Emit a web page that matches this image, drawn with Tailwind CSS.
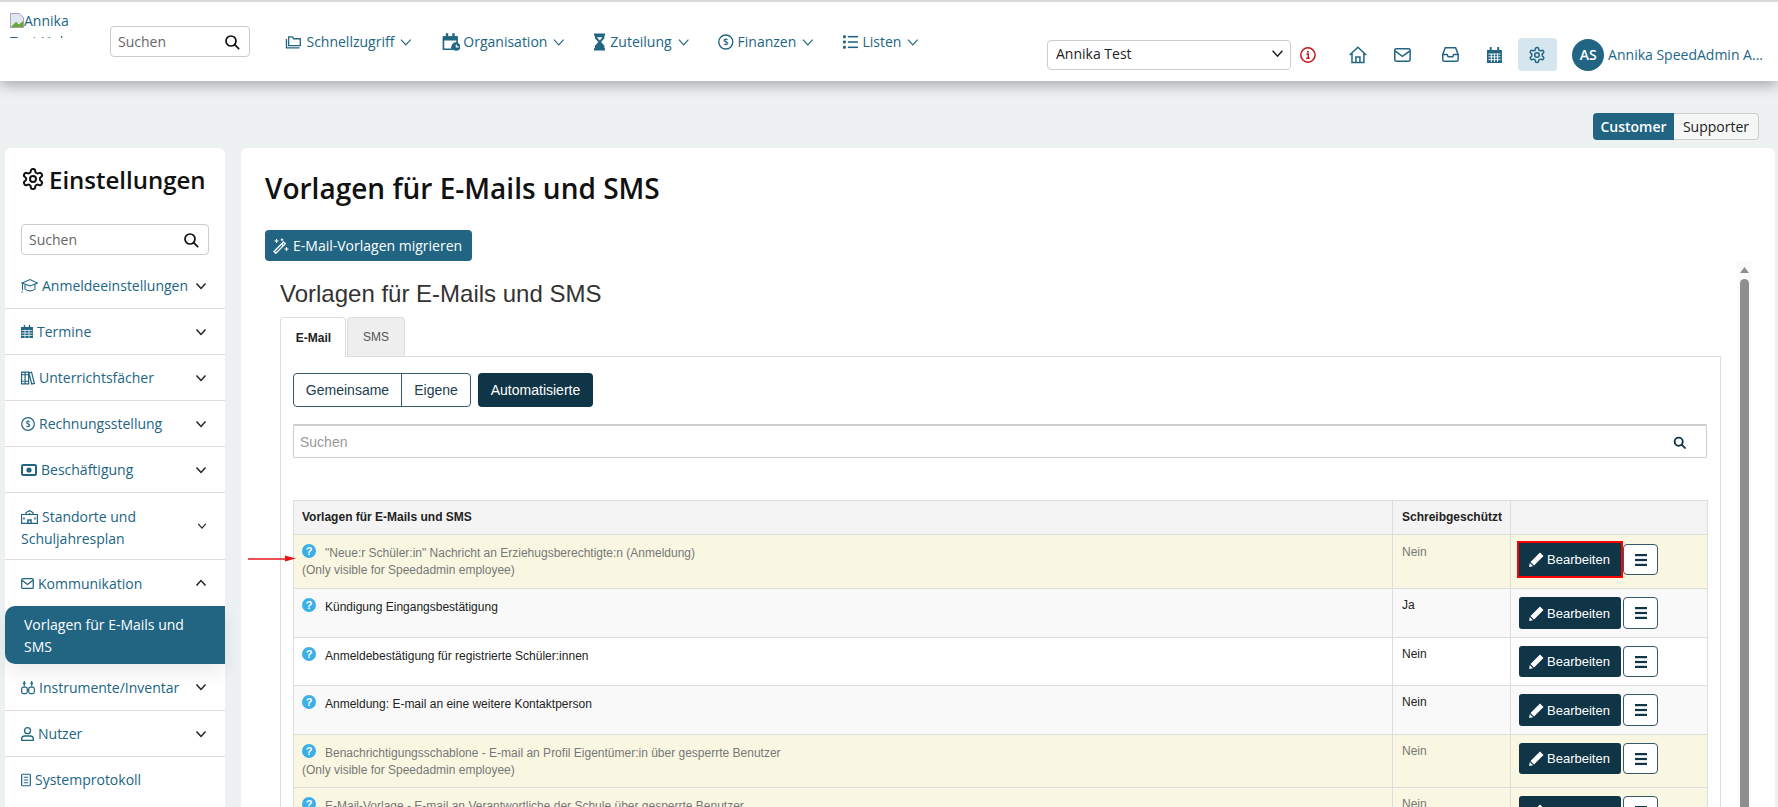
<!doctype html>
<html lang="de"><head><meta charset="utf-8"><title>Vorlagen</title>
<script src="https://cdn.jsdelivr.net/npm/@tailwindcss/browser@4"></script></head>
<body class="m-0 bg-[#eef1f2]">
<div class="h-[807px] w-[1778px] overflow-hidden flex flex-col relative font-['Open_Sans',sans-serif] text-[14px] text-[#216583]">
<!-- header -->
<header class="relative z-10 h-[81px] bg-white border-t-2 border-[#d9d9d9] shadow-[0_3px_14px_rgba(0,0,0,0.35)] flex items-start shrink-0">
  <div class="ml-[10px] mt-[8px] w-[68px] h-[28px] overflow-hidden leading-[21px] text-[14px]">
    <svg class="inline-block align-[-2px]" width="14" height="15" viewBox="0 0 16 17"><path d="M.5.5h10l5 5v11H.5z" fill="#dfe6f5" stroke="#999"/><path d="M1 16l6-6 3 3 5-4v7H1z" fill="#6aa53a"/></svg>Annika Test Hub
  </div>
  <div class="ml-[32px] mt-[24px] w-[140px] h-[31px] border border-[#ccc] rounded-[4px] flex items-center justify-between pl-[7px] pr-[9px] text-[#666]">
    <span>Suchen</span>
    <svg width="16" height="16" viewBox="0 0 24 24" fill="none" stroke="#111" stroke-width="2.600" stroke-linecap="round"><circle cx="10.500" cy="10.500" r="7.500"/><path d="m16 16 6 6"/></svg>
  </div>
  <nav class="ml-[35px] mt-[24px] h-[31px] flex items-center gap-[29px]">
    <div class="w-[127px] flex items-center gap-[4px]">
      <svg width="18" height="18" viewBox="0 0 24 24" fill="none" stroke="#216583" stroke-width="1.800"><path d="M5 5h5l2 2.500h9V17H5z"/><path d="M2 8v12h18"/></svg>
      <span>Schnellzugriff</span>
      <svg class="ml-[2px]" width="12" height="12" viewBox="0 0 24 24" fill="none" stroke="#216583" stroke-width="2.400"><path d="m2 7 10 11 10-11"/></svg>
    </div>
    <div class="w-[124px] flex items-center gap-[3px]">
      <svg width="20" height="20" viewBox="0 0 24 24"><path d="M3 6h17v7a6 6 0 0 0-6 8H3z" fill="none" stroke="#216583" stroke-width="2"/><path d="M3 5h17v5H3zM6 1h3v4H6zM14 1h3v4h-3z" fill="#216583"/><circle cx="19" cy="18" r="5" fill="#216583"/><path d="M19 15v3h3" stroke="#fff" fill="none" stroke-width="1.400"/></svg>
      <span>Organisation</span>
      <svg class="ml-[3px]" width="12" height="12" viewBox="0 0 24 24" fill="none" stroke="#216583" stroke-width="2.400"><path d="m2 7 10 11 10-11"/></svg>
    </div>
    <div class="w-[95px] flex items-center gap-[5px]">
      <svg width="12" height="18" viewBox="0 0 12 18"><path d="M0 0h12v2.500h-1V5L7.500 9 11 13v2.500h1V18H0v-2.500h1V13l3.500-4L1 5V2.500H0z" fill="#216583"/><path d="M3 4h6L6 7.500z" fill="#fff"/></svg>
      <span>Zuteilung</span>
      <svg class="ml-[1px]" width="12" height="12" viewBox="0 0 24 24" fill="none" stroke="#216583" stroke-width="2.400"><path d="m2 7 10 11 10-11"/></svg>
    </div>
    <div class="w-[96px] flex items-center gap-[4px]">
      <svg width="16" height="16" viewBox="0 0 16 16" fill="none" stroke="#216583" stroke-width="1.400"><circle cx="8" cy="8" r="7.200"/><text x="8" y="11.500" font-size="10" font-family="Open Sans" font-weight="600" text-anchor="middle" fill="#216583" stroke="none">$</text></svg>
      <span>Finanzen</span>
      <svg class="ml-[2px]" width="12" height="12" viewBox="0 0 24 24" fill="none" stroke="#216583" stroke-width="2.400"><path d="m2 7 10 11 10-11"/></svg>
    </div>
    <div class="w-[76px] flex items-center gap-[4px]">
      <svg width="16" height="14" viewBox="0 0 16 14" fill="#216583"><rect x="0" y="0" width="3" height="3" rx="1"/><rect x="0" y="5.500" width="3" height="3" rx="1"/><rect x="0" y="11" width="3" height="3" rx="1"/><rect x="5" y=".7" width="11" height="1.600"/><rect x="5" y="6.200" width="11" height="1.600"/><rect x="5" y="11.700" width="11" height="1.600"/></svg>
      <span>Listen</span>
      <svg class="ml-[2px]" width="12" height="12" viewBox="0 0 24 24" fill="none" stroke="#216583" stroke-width="2.400"><path d="m2 7 10 11 10-11"/></svg>
    </div>
  </nav>
  <div class="ml-auto mt-[36px] flex items-center h-[33px] pr-[15px] w-[731px]">
    <div class="w-[246px] h-[30px] border border-[#ccc] rounded-[4px] flex items-center justify-between pl-[8px] pr-[6px] pb-[2px] text-[#222]">
      <span>Annika Test</span>
      <svg width="13" height="13" viewBox="0 0 24 24" fill="none" stroke="#222" stroke-width="2.800"><path d="m3 7 9 10 9-10"/></svg>
    </div>
    <svg class="ml-[9px]" width="16" height="16" viewBox="0 0 16 16" fill="none" stroke="#c81414" stroke-width="1.500"><circle cx="8" cy="8" r="7.200"/><path d="M6.500 7H8.300v4.200M6.300 11.300h3.500" stroke-width="1.400"/><circle cx="8" cy="4.700" r="1" fill="#c81414" stroke="none"/></svg>
    <svg class="ml-[33px]" width="18" height="18" viewBox="0 0 18 18" fill="none" stroke="#216583" stroke-width="1.500"><path d="M.7 9 9 1.200 17.300 9M3 7v9.500h12V7M7 16.500v-5.500h4v5.500"/></svg>
    <svg class="ml-[27px]" width="17" height="14" viewBox="0 0 18 15" fill="none" stroke="#216583" stroke-width="1.600"><rect x=".8" y=".8" width="16.400" height="13.400" rx="1.500"/><path d="m1 3 8 6 8-6"/></svg>
    <svg class="ml-[31px]" width="17" height="15" viewBox="0 0 18 16" fill="none" stroke="#216583" stroke-width="1.600"><path d="M3.500.8h11L17.200 8v5.500a1.700 1.700 0 0 1-1.700 1.700h-13A1.700 1.700 0 0 1 .8 13.500V8z"/><path d="M1 8h4.500l1 2.500h5L12.500 8H17"/></svg>
    <svg class="ml-[28px]" width="15" height="16" viewBox="0 0 16 17"><path d="M0 3h16v14H0zM3 0h2v3H3zM11 0h2v3h-2z" fill="#216583"/><path d="M1.500 7.500h13M1.500 10.500h13M1.500 13.500h13M4.700 7v9M8 7v9M11.300 7v9" stroke="#fff" stroke-width="1" fill="none"/></svg>
    <div class="ml-[16px] w-[40px] h-[33px] rounded-[4px] bg-[#d6e6ef] flex items-center justify-center">
      <svg width="18" height="18" viewBox="0 0 24 24" fill="none" stroke="#216583" stroke-width="2"><path d="M12.220 2h-.44a2 2 0 0 0-2 2v.18a2 2 0 0 1-1 1.730l-.43.25a2 2 0 0 1-2 0l-.15-.08a2 2 0 0 0-2.730.73l-.22.38a2 2 0 0 0 .73 2.730l.15.1a2 2 0 0 1 1 1.720v.51a2 2 0 0 1-1 1.740l-.15.09a2 2 0 0 0-.73 2.730l.22.38a2 2 0 0 0 2.730.73l.15-.08a2 2 0 0 1 2 0l.43.25a2 2 0 0 1 1 1.730V20a2 2 0 0 0 2 2h.44a2 2 0 0 0 2-2v-.18a2 2 0 0 1 1-1.730l.43-.25a2 2 0 0 1 2 0l.15.08a2 2 0 0 0 2.730-.73l.22-.39a2 2 0 0 0-.73-2.730l-.15-.08a2 2 0 0 1-1-1.740v-.5a2 2 0 0 1 1-1.740l.15-.09a2 2 0 0 0 .73-2.730l-.22-.38a2 2 0 0 0-2.730-.73l-.15.08a2 2 0 0 1-2 0l-.43-.25a2 2 0 0 1-1-1.730V4a2 2 0 0 0-2-2z"/><circle cx="12" cy="12" r="3"/></svg>
    </div>
    <div class="ml-[15px] w-[32px] h-[32px] rounded-full bg-[#216583] text-white font-semibold flex items-center justify-center">AS</div>
    <span class="ml-[4px] whitespace-nowrap">Annika SpeedAdmin A...</span>
  </div>
</header>
<!-- toggle -->
<div class="h-[67px] shrink-0 flex justify-end items-start pt-[32px] pr-[19px]">
  <div class="flex h-[27px] items-stretch">
    <div class="w-[81px] bg-[#216583] text-white font-semibold rounded-l-[4px] flex items-center justify-center">Customer</div>
    <div class="w-[85px] border border-[#ccc] border-l-0 bg-[#f5f6f6] text-[#222] rounded-r-[4px] flex items-center justify-center">Supporter</div>
  </div>
</div>
<!-- body -->
<div class="flex-1 min-h-0 flex pl-[5px] pr-[3px] gap-[16px]">
  <!-- sidebar -->
  <aside class="w-[220px] shrink-0 bg-white rounded-t-[6px] flex flex-col">
    <div class="h-[76px] shrink-0 flex items-center pl-[16px] pb-[14px] gap-[4px] text-[#111]">
      <svg width="24" height="24" viewBox="0 0 24 24" fill="none" stroke="#111" stroke-width="2"><path d="M12.220 2h-.44a2 2 0 0 0-2 2v.18a2 2 0 0 1-1 1.730l-.43.25a2 2 0 0 1-2 0l-.15-.08a2 2 0 0 0-2.730.73l-.22.38a2 2 0 0 0 .73 2.730l.15.1a2 2 0 0 1 1 1.720v.51a2 2 0 0 1-1 1.740l-.15.09a2 2 0 0 0-.73 2.730l.22.38a2 2 0 0 0 2.730.73l.15-.08a2 2 0 0 1 2 0l.43.25a2 2 0 0 1 1 1.730V20a2 2 0 0 0 2 2h.44a2 2 0 0 0 2-2v-.18a2 2 0 0 1 1-1.730l.43-.25a2 2 0 0 1 2 0l.15.08a2 2 0 0 0 2.730-.73l.22-.39a2 2 0 0 0-.73-2.730l-.15-.08a2 2 0 0 1-1-1.740v-.5a2 2 0 0 1 1-1.740l.15-.09a2 2 0 0 0 .73-2.730l-.22-.38a2 2 0 0 0-2.730-.73l-.15.08a2 2 0 0 1-2 0l-.43-.25a2 2 0 0 1-1-1.730V4a2 2 0 0 0-2-2z"/><circle cx="12" cy="12" r="3"/></svg>
      <span class="text-[24px] leading-[33px] font-semibold">Einstellungen</span>
    </div>
    <div class="ml-[16px] w-[188px] h-[31px] shrink-0 border border-[#ccc] rounded-[4px] flex items-center justify-between pl-[7px] pr-[9px] text-[#666]">
      <span>Suchen</span>
      <svg width="16" height="16" viewBox="0 0 24 24" fill="none" stroke="#111" stroke-width="2.600" stroke-linecap="round"><circle cx="10.500" cy="10.500" r="7.500"/><path d="m16 16 6 6"/></svg>
    </div>
    <div class="mt-[8px] flex flex-col">
      <div class="h-[46px] border-b border-[#ddd] flex items-center justify-between pl-[16px] pr-[18px]">
        <span class="flex items-center gap-[4px]"><svg width="17" height="15" viewBox="0 0 17 15" fill="none" stroke="#216583" stroke-width="1.100"><path d="M1 5 9 1.500 16.500 5 9 8z"/><path d="M4 7v4c2 2.500 8 2.500 10 0V6.500M1.500 5.500V12M2 14H.5"/></svg>Anmeldeeinstellungen</span>
        <svg width="12" height="12" viewBox="0 0 24 24" fill="none" stroke="#222" stroke-width="3"><path d="m3 7 9 10 9-10"/></svg>
      </div>
      <div class="h-[46px] border-b border-[#ddd] flex items-center justify-between pl-[16px] pr-[18px]">
        <span class="flex items-center gap-[4px]"><svg width="12" height="13" viewBox="0 0 13 14"><path d="M0 2h13v12H0zM3 0h1.500v2H3zM8.500 0H10v2H8.500z" fill="#216583"/><path d="M.5 6h12M.5 8.700h12M.5 11.300h12M4.300 5v9M8.700 5v9" stroke="#fff" stroke-width=".8"/></svg>Termine</span>
        <svg width="12" height="12" viewBox="0 0 24 24" fill="none" stroke="#222" stroke-width="3"><path d="m3 7 9 10 9-10"/></svg>
      </div>
      <div class="h-[46px] border-b border-[#ddd] flex items-center justify-between pl-[16px] pr-[18px]">
        <span class="flex items-center gap-[4px]"><svg width="14" height="14" viewBox="0 0 15 14" fill="none" stroke="#216583" stroke-width="1.300"><path d="M.6.600h3.800v12.800H.6zM4.400.600h3.800v12.800H4.400zM8.500 1.500l2.800-.7 3 12-2.800.7zM.6 3.500h7.600M.6 10.500h7.600"/></svg>Unterrichtsfächer</span>
        <svg width="12" height="12" viewBox="0 0 24 24" fill="none" stroke="#222" stroke-width="3"><path d="m3 7 9 10 9-10"/></svg>
      </div>
      <div class="h-[46px] border-b border-[#ddd] flex items-center justify-between pl-[16px] pr-[18px]">
        <span class="flex items-center gap-[4px]"><svg width="14" height="14" viewBox="0 0 16 16" fill="none" stroke="#216583" stroke-width="1.400"><circle cx="8" cy="8" r="7.200"/><text x="8" y="11.500" font-size="10" font-family="Open Sans" font-weight="600" text-anchor="middle" fill="#216583" stroke="none">$</text></svg>Rechnungsstellung</span>
        <svg width="12" height="12" viewBox="0 0 24 24" fill="none" stroke="#222" stroke-width="3"><path d="m3 7 9 10 9-10"/></svg>
      </div>
      <div class="h-[46px] border-b border-[#ddd] flex items-center justify-between pl-[16px] pr-[18px]">
        <span class="flex items-center gap-[4px]"><svg width="16" height="12" viewBox="0 0 16 12"><rect x="1" y="1" width="14" height="10" rx="1.200" fill="none" stroke="#216583" stroke-width="2"/><circle cx="8" cy="6" r="2.600" fill="#216583"/></svg>Beschäftigung</span>
        <svg width="12" height="12" viewBox="0 0 24 24" fill="none" stroke="#222" stroke-width="3"><path d="m3 7 9 10 9-10"/></svg>
      </div>
      <div class="h-[67px] border-b border-[#ddd] flex items-center justify-between pl-[16px] pr-[18px]">
        <span class="leading-[22px] w-[140px] pt-[3px]"><svg class="inline-block align-[-2px] mr-[4px]" width="17" height="14" viewBox="0 0 17 14" fill="none" stroke="#216583" stroke-width="1.200"><path d="M.6 4.500h15.800v8.900H.6zM5 4.500V2.500L8.500.6 12 2.500v2"/><path d="M7 13.500v-3.500h3v3.500M3 7.500v2M14 7.500v2M8.500 3v2" stroke-width="1.500"/></svg>Standorte und Schuljahresplan</span>
        <svg width="10" height="10" viewBox="0 0 24 24" fill="none" stroke="#222" stroke-width="3"><path d="m3 7 9 10 9-10"/></svg>
      </div>
      <div class="h-[46px] flex items-center justify-between pl-[16px] pr-[18px]">
        <span class="flex items-center gap-[4px]"><svg width="13" height="11" viewBox="0 0 14 12" fill="none" stroke="#216583" stroke-width="1.400"><rect x=".7" y=".7" width="12.600" height="10.600" rx="1.300"/><path d="m1 2.500 6 4.500 6-4.500"/></svg>Kommunikation</span>
        <svg width="12" height="12" viewBox="0 0 24 24" fill="none" stroke="#222" stroke-width="3"><path d="m3 17 9-10 9 10"/></svg>
      </div>
      <div class="relative h-[58px] bg-[#216583] text-white rounded-l-[10px] pl-[19px] pr-[12px] py-[8px] leading-[21.500px] font-medium shadow-[0_8px_20px_rgba(0,0,0,0.08)]">Vorlagen für E-Mails und SMS</div>
      <div class="h-[47px] border-b border-[#ddd] flex items-center justify-between pl-[16px] pr-[18px]">
        <span class="flex items-center gap-[4px]"><svg width="14" height="15" viewBox="0 0 15 15" fill="none" stroke="#216583" stroke-width="1.300"><path d="M3.500.5v6M11.500.5v6M2 3h3M10 3h3"/><rect x=".7" y="7" width="6" height="7" rx="2"/><rect x="8.300" y="7" width="6" height="7" rx="2"/><path d="M6.500 10h2"/></svg>Instrumente/Inventar</span>
        <svg width="12" height="12" viewBox="0 0 24 24" fill="none" stroke="#222" stroke-width="3"><path d="m3 7 9 10 9-10"/></svg>
      </div>
      <div class="h-[46px] border-b border-[#ddd] flex items-center justify-between pl-[16px] pr-[18px]">
        <span class="flex items-center gap-[4px]"><svg width="13" height="14" viewBox="0 0 13 14" fill="none" stroke="#216583" stroke-width="1.300"><circle cx="6.500" cy="3.700" r="3"/><path d="M.7 13.300v-1.300c0-2 1.500-3 3-3h5.600c1.500 0 3 1 3 3v1.300z"/></svg>Nutzer</span>
        <svg width="12" height="12" viewBox="0 0 24 24" fill="none" stroke="#222" stroke-width="3"><path d="m3 7 9 10 9-10"/></svg>
      </div>
      <div class="h-[45px] flex items-center pl-[16px] pr-[18px]">
        <span class="flex items-center gap-[4px]"><svg width="10" height="14" viewBox="0 0 11 14" fill="none" stroke="#216583" stroke-width="1.300"><rect x=".7" y=".7" width="9.600" height="12.600" rx="1"/><path d="M3 4h5M3 7h5M3 10h5"/></svg>Systemprotokoll</span>
      </div>
    </div>
  </aside>
  <!-- panel -->
  <main class="flex-1 min-w-0 bg-white rounded-t-[6px] pl-[24px] flex flex-col">
    <h1 class="mt-[21px] h-[38px] leading-[38px] text-[28px] font-semibold text-[#111] shrink-0">Vorlagen für E-Mails und SMS</h1>
    <button class="mt-[23px] w-[207px] h-[31px] shrink-0 bg-[#216583] text-white rounded-[4px] flex items-center pl-[8px] gap-[4px] text-[14px]">
      <svg width="16" height="16" viewBox="0 0 16 16" fill="none" stroke="#fff"><path d="M1 13.500 10.500 4l1.800 1.800L2.800 15.300z" stroke-width="1.300"/><path d="M8.500 6l1.800 1.800" stroke-width="1.300"/><path d="M3.500 1v4M1.500 3h4M13.500 9v4M11.500 11h4M9 .5v2.500M7.700 1.700h2.600" stroke-width="1.100"/></svg>
      <span>E-Mail-Vorlagen migrieren</span>
    </button>
    <div class="flex-1 min-h-0 flex">
      <div class="w-[1472px] shrink-0 pl-[15px] font-['Liberation_Sans',sans-serif] text-[#333]">
        <h2 class="pt-[20px] h-[56px] leading-[26px] text-[24px] text-[#333] font-normal">Vorlagen für E-Mails und SMS</h2>
        <div class="flex h-[39px] relative z-[1] text-[12px]">
          <div class="w-[66px] h-[40px] bg-white border border-[#ddd] border-b-0 rounded-t-[4px] font-bold text-[#222] flex items-center justify-center pl-[1px]">E-Mail</div>
          <div class="ml-[1px] w-[58px] bg-[#eee] border border-[#ddd] border-b-0 rounded-t-[4px] text-[#555] flex items-center justify-center">SMS</div>
        </div>
        <div class="w-[1441px] border border-[#ddd] pt-[16px] pl-[12px] pr-[13px] h-[600px]">
          <div class="flex h-[34px] text-[14px]">
            <div class="flex border border-[#37596a] rounded-[4px] text-[#1b3d4e]">
              <div class="w-[108px] flex items-center justify-center border-r border-[#37596a]">Gemeinsame</div>
              <div class="w-[68px] flex items-center justify-center">Eigene</div>
            </div>
            <div class="ml-[7px] w-[115px] bg-[#0f3547] text-white rounded-[4px] flex items-center justify-center">Automatisierte</div>
          </div>
          <div class="mt-[17px] h-[34px] border border-[#ccc] border-t-2 rounded-[2px] flex items-center justify-between pl-[6px] pr-[20px] pt-[1px] text-[14px] text-[#999]">
            <span>Suchen</span>
            <svg width="13" height="13" viewBox="0 0 24 24" fill="none" stroke="#0f3547" stroke-width="3.400" stroke-linecap="round"><circle cx="10.500" cy="10.500" r="7.500"/><path d="m16 16 6 6"/></svg>
          </div>
          <table class="mt-[42px] w-[1414px] table-fixed border-collapse text-[12px] leading-[17px]">
            <colgroup><col class="w-[1099px]"><col class="w-[118px]"><col class="w-[197px]"></colgroup>
            <thead>
              <tr class="h-[34px] bg-[#f4f4f4] text-[#222]">
                <th class="border border-[#ddd] text-left font-bold pl-[8px]">Vorlagen für E-Mails und SMS</th>
                <th class="border border-[#ddd] text-left font-bold pl-[9px]">Schreibgeschützt</th>
                <th class="border border-[#ddd]"></th>
              </tr>
            </thead>
            <tbody>
              <tr class="h-[54px] bg-[#f9f7e2] text-[#777] align-top">
                <td class="border border-[#ddd] pl-[8px] pt-[9px]"><svg class="inline-block align-[-1px] mr-[9px]" width="14" height="14" viewBox="0 0 14 14"><circle cx="7" cy="7" r="7" fill="#3bafe8"/><text x="7" y="11" text-anchor="middle" font-size="11" font-weight="700" font-family="Liberation Sans" fill="#fff">?</text></svg>"Neue:r Schüler:in" Nachricht an Erziehugsberechtigte:n (Anmeldung)<br>(Only visible for Speedadmin employee)</td>
                <td class="border border-[#ddd] pl-[9px] pt-[9px]">Nein</td>
                <td class="border border-[#ddd] pl-[8px] pt-[8px]"><div class="flex gap-[2px]">
                  <button class="w-[102px] h-[33px] bg-[#0f3547] text-white text-[13px] flex items-center pl-[10px] gap-[3px] outline-2 outline-[#f00]"><svg width="15" height="15" viewBox="0 0 15 15" fill="#fff"><path d="M11 .5 14.500 4 5 13.500 1.500 10zM.7 11l3.300 3.300-3.800.7z"/></svg>Bearbeiten</button>
                  <button class="mt-[1px] w-[35px] h-[31px] bg-white border border-[#37596a] rounded-[4px] flex items-center justify-center"><svg width="12" height="12" viewBox="0 0 12 12" fill="#0f3547"><rect y="0" width="12" height="2.200"/><rect y="4.900" width="12" height="2.200"/><rect y="9.800" width="12" height="2.200"/></svg></button>
                </div></td>
              </tr>
              <tr class="h-[49px] bg-[#f9f9f9] text-[#222] align-top">
                <td class="border border-[#ddd] pl-[8px] pt-[9px]"><svg class="inline-block align-[-1px] mr-[9px]" width="14" height="14" viewBox="0 0 14 14"><circle cx="7" cy="7" r="7" fill="#3bafe8"/><text x="7" y="11" text-anchor="middle" font-size="11" font-weight="700" font-family="Liberation Sans" fill="#fff">?</text></svg>Kündigung Eingangsbestätigung</td>
                <td class="border border-[#ddd] pl-[9px] pt-[8px]">Ja</td>
                <td class="border border-[#ddd] pl-[8px] pt-[8px]"><div class="flex gap-[2px]">
                  <button class="w-[102px] h-[32px] bg-[#0f3547] text-white text-[13px] rounded-[3px] flex items-center pl-[10px] gap-[3px]"><svg width="15" height="15" viewBox="0 0 15 15" fill="#fff"><path d="M11 .5 14.500 4 5 13.500 1.500 10zM.7 11l3.300 3.300-3.800.7z"/></svg>Bearbeiten</button>
                  <button class="w-[35px] h-[32px] bg-white border border-[#37596a] rounded-[4px] flex items-center justify-center"><svg width="12" height="12" viewBox="0 0 12 12" fill="#0f3547"><rect y="0" width="12" height="2.200"/><rect y="4.900" width="12" height="2.200"/><rect y="9.800" width="12" height="2.200"/></svg></button>
                </div></td>
              </tr>
              <tr class="h-[48px] bg-white text-[#222] align-top">
                <td class="border border-[#ddd] pl-[8px] pt-[9px]"><svg class="inline-block align-[-1px] mr-[9px]" width="14" height="14" viewBox="0 0 14 14"><circle cx="7" cy="7" r="7" fill="#3bafe8"/><text x="7" y="11" text-anchor="middle" font-size="11" font-weight="700" font-family="Liberation Sans" fill="#fff">?</text></svg>Anmeldebestätigung für registrierte Schüler:innen</td>
                <td class="border border-[#ddd] pl-[9px] pt-[8px]">Nein</td>
                <td class="border border-[#ddd] pl-[8px] pt-[8px]"><div class="flex gap-[2px]">
                  <button class="w-[102px] h-[31px] bg-[#0f3547] text-white text-[13px] rounded-[3px] flex items-center pl-[10px] gap-[3px]"><svg width="15" height="15" viewBox="0 0 15 15" fill="#fff"><path d="M11 .5 14.500 4 5 13.500 1.500 10zM.7 11l3.300 3.300-3.800.7z"/></svg>Bearbeiten</button>
                  <button class="w-[35px] h-[31px] bg-white border border-[#37596a] rounded-[4px] flex items-center justify-center"><svg width="12" height="12" viewBox="0 0 12 12" fill="#0f3547"><rect y="0" width="12" height="2.200"/><rect y="4.900" width="12" height="2.200"/><rect y="9.800" width="12" height="2.200"/></svg></button>
                </div></td>
              </tr>
              <tr class="h-[49px] bg-[#f9f9f9] text-[#222] align-top">
                <td class="border border-[#ddd] pl-[8px] pt-[9px]"><svg class="inline-block align-[-1px] mr-[9px]" width="14" height="14" viewBox="0 0 14 14"><circle cx="7" cy="7" r="7" fill="#3bafe8"/><text x="7" y="11" text-anchor="middle" font-size="11" font-weight="700" font-family="Liberation Sans" fill="#fff">?</text></svg>Anmeldung: E-mail an eine weitere Kontaktperson</td>
                <td class="border border-[#ddd] pl-[9px] pt-[8px]">Nein</td>
                <td class="border border-[#ddd] pl-[8px] pt-[8px]"><div class="flex gap-[2px]">
                  <button class="w-[102px] h-[32px] bg-[#0f3547] text-white text-[13px] rounded-[3px] flex items-center pl-[10px] gap-[3px]"><svg width="15" height="15" viewBox="0 0 15 15" fill="#fff"><path d="M11 .5 14.500 4 5 13.500 1.500 10zM.7 11l3.300 3.300-3.800.7z"/></svg>Bearbeiten</button>
                  <button class="w-[35px] h-[32px] bg-white border border-[#37596a] rounded-[4px] flex items-center justify-center"><svg width="12" height="12" viewBox="0 0 12 12" fill="#0f3547"><rect y="0" width="12" height="2.200"/><rect y="4.900" width="12" height="2.200"/><rect y="9.800" width="12" height="2.200"/></svg></button>
                </div></td>
              </tr>
              <tr class="h-[53px] bg-[#f9f7e2] text-[#777] align-top">
                <td class="border border-[#ddd] pl-[8px] pt-[9px]"><svg class="inline-block align-[-1px] mr-[9px]" width="14" height="14" viewBox="0 0 14 14"><circle cx="7" cy="7" r="7" fill="#3bafe8"/><text x="7" y="11" text-anchor="middle" font-size="11" font-weight="700" font-family="Liberation Sans" fill="#fff">?</text></svg>Benachrichtigungsschablone - E-mail an Profil Eigentümer:in über gesperrte Benutzer<br>(Only visible for Speedadmin employee)</td>
                <td class="border border-[#ddd] pl-[9px] pt-[8px]">Nein</td>
                <td class="border border-[#ddd] pl-[8px] pt-[8px]"><div class="flex gap-[2px]">
                  <button class="w-[102px] h-[31px] bg-[#0f3547] text-white text-[13px] rounded-[3px] flex items-center pl-[10px] gap-[3px]"><svg width="15" height="15" viewBox="0 0 15 15" fill="#fff"><path d="M11 .5 14.500 4 5 13.500 1.500 10zM.7 11l3.300 3.300-3.800.7z"/></svg>Bearbeiten</button>
                  <button class="w-[35px] h-[31px] bg-white border border-[#37596a] rounded-[4px] flex items-center justify-center"><svg width="12" height="12" viewBox="0 0 12 12" fill="#0f3547"><rect y="0" width="12" height="2.200"/><rect y="4.900" width="12" height="2.200"/><rect y="9.800" width="12" height="2.200"/></svg></button>
                </div></td>
              </tr>
              <tr class="h-[53px] bg-[#f9f7e2] text-[#777] align-top">
                <td class="border border-[#ddd] pl-[8px] pt-[9px]"><svg class="inline-block align-[-1px] mr-[9px]" width="14" height="14" viewBox="0 0 14 14"><circle cx="7" cy="7" r="7" fill="#3bafe8"/><text x="7" y="11" text-anchor="middle" font-size="11" font-weight="700" font-family="Liberation Sans" fill="#fff">?</text></svg>E-Mail-Vorlage - E-mail an Verantwortliche der Schule über gesperrte Benutzer</td>
                <td class="border border-[#ddd] pl-[9px] pt-[8px]">Nein</td>
                <td class="border border-[#ddd] pl-[8px] pt-[8px]"><div class="flex gap-[2px]">
                  <button class="w-[102px] h-[31px] bg-[#0f3547] text-white text-[13px] rounded-[3px] flex items-center pl-[10px] gap-[3px]"><svg width="15" height="15" viewBox="0 0 15 15" fill="#fff"><path d="M11 .5 14.500 4 5 13.500 1.500 10zM.7 11l3.300 3.300-3.800.7z"/></svg>Bearbeiten</button>
                  <button class="w-[35px] h-[31px] bg-white border border-[#37596a] rounded-[4px] flex items-center justify-center"><svg width="12" height="12" viewBox="0 0 12 12" fill="#0f3547"><rect y="0" width="12" height="2.200"/><rect y="4.900" width="12" height="2.200"/><rect y="9.800" width="12" height="2.200"/></svg></button>
                </div></td>
              </tr>
            </tbody>
          </table>
        </div>
      </div>
      <!-- scrollbar -->
      <div class="w-[14px] shrink-0 flex flex-col items-center bg-[#fafafa]">
        <svg class="mt-[6px]" width="9" height="6" viewBox="0 0 9 6"><path d="M4.500 0 9 6H0z" fill="#8e8e8e"/></svg>
        <div class="mt-[6px] w-[9px] flex-1 bg-[#8e8e8e] rounded-t-[5px]"></div>
      </div>
    </div>
  </main>
</div>
<!-- annotation arrow -->
<svg class="absolute left-[248px] top-[552px] z-20" width="48" height="12" viewBox="0 0 48 12"><path d="M0 7h38" stroke="#e8161a" stroke-width="1.600"/><path d="M37 3.500 48 6.500 37 9.500z" fill="#e8161a"/></svg>
</div>
</body></html>
